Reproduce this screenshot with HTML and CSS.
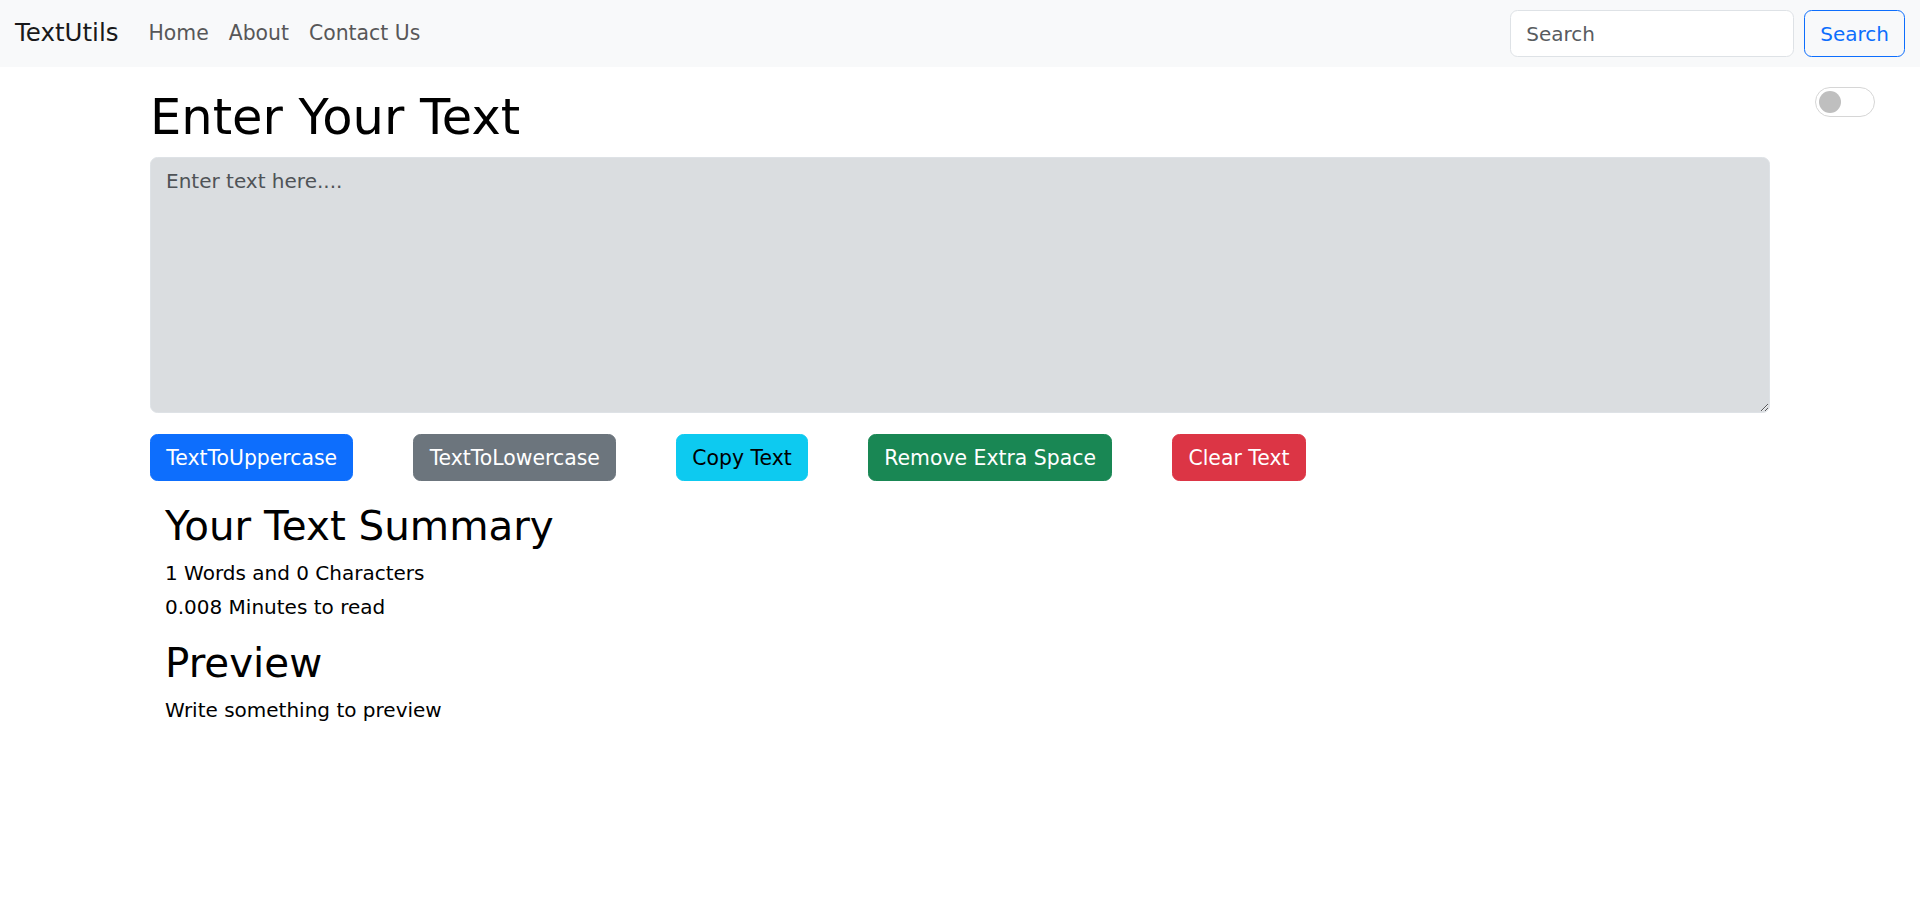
FILE: index.html
```html
<!DOCTYPE html>
<html lang="en">
<head>
<meta charset="utf-8">
<title>TextUtils</title>
<link rel="stylesheet" href="styles.css">
</head>
<body>
<nav class="navbar">
  <a class="brand" href="#">TextUtils</a>
  <ul class="nav-links">
    <li><a href="#">Home</a></li>
    <li><a href="#">About</a></li>
    <li><a href="#">Contact Us</a></li>
  </ul>
  <form class="search">
    <input class="search-input" type="search" placeholder="Search">
    <button class="btn-outline" type="button">Search</button>
  </form>
</nav>

<div class="mode-toggle"><span class="knob"></span></div>

<div class="container">
  <h1 class="title">Enter Your Text</h1>
  <textarea class="text-box" placeholder="Enter text here...."></textarea>
  <div class="actions">
    <button class="btn btn-primary" type="button">TextToUppercase</button>
    <button class="btn btn-secondary" type="button">TextToLowercase</button>
    <button class="btn btn-info" type="button">Copy Text</button>
    <button class="btn btn-success" type="button">Remove Extra Space</button>
    <button class="btn btn-danger" type="button">Clear Text</button>
  </div>
</div>

<div class="container summary">
  <h2 class="section-title">Your Text Summary</h2>
  <p class="line">1 Words and 0 Characters</p>
  <p class="line">0.008 Minutes to read</p>
  <h2 class="section-title preview-title">Preview</h2>
  <p class="line">Write something to preview</p>
</div>
</body>
</html>
```

FILE: styles.css
```css
* { box-sizing: border-box; }

body {
  margin: 0;
  font-family: "DejaVu Sans", sans-serif;
  color: #000;
  background: #fff;
}

.navbar {
  display: flex;
  align-items: center;
  height: 67px;
  padding: 0 15px;
  background: #f8f9fa;
}

.brand {
  font-size: 24.5px;
  line-height: 36px;
  margin-top: -2px;
  color: #19191a;
  text-decoration: none;
  margin-right: 20px;
}

.nav-links {
  display: flex;
  list-style: none;
  margin: -2px 0 0;
  padding: 0;
}

.nav-links a {
  display: block;
  padding: 0 10px;
  font-size: 20.4px;
  line-height: 30px;
  color: #575758;
  text-decoration: none;
}

.search {
  margin: 0 0 0 auto;
  display: flex;
  gap: 10px;
}

.search-input {
  width: 284px;
  height: 47px;
  padding: 0 15px;
  border: 1.25px solid #dee2e6;
  border-radius: 7.5px;
  background: #fff;
  font-family: "DejaVu Sans", sans-serif;
  font-size: 20px;
  color: #212529;
}

.search-input::placeholder { color: #595c5f; }

.btn-outline {
  height: 47px;
  padding: 0 15px;
  border: 1.25px solid #0d6efd;
  border-radius: 7.5px;
  background: transparent;
  color: #0d6efd;
  font-family: "DejaVu Sans", sans-serif;
  font-size: 20px;
}

.mode-toggle {
  float: right;
  display: flex;
  align-items: center;
  width: 60px;
  height: 30px;
  margin: 20px 45px 0 0;
  padding-left: 3px;
  border: 1.25px solid #d6d6d6;
  border-radius: 15px;
  background: #fff;
}

.knob {
  width: 22px;
  height: 22px;
  border-radius: 50%;
  background: #bfbfbf;
}

.container {
  max-width: 1650px;
  margin: 20px auto 0;
  padding: 0 15px;
}

.title {
  margin: 0 0 10px;
  font-size: 49.5px;
  line-height: 60px;
  font-weight: 400;
}

.text-box {
  display: block;
  width: 100%;
  height: 256px;
  padding: 7.5px 15px;
  border: 1.25px solid #dee2e6;
  border-radius: 7.5px;
  background: #dadde0;
  font-family: "DejaVu Sans", sans-serif;
  font-size: 20px;
  line-height: 30px;
  color: #212529;
}

.text-box::placeholder { color: #4f5357; }

.actions {
  display: flex;
  gap: 60px;
  margin-top: 21px;
}

.btn {
  padding: 7.5px 15.25px;
  border: 1px solid transparent;
  border-radius: 7.5px;
  font-family: "DejaVu Sans", sans-serif;
  font-size: 20.4px;
  line-height: 30px;
  color: #fff;
}

.btn-primary { background: #0d6efd; border-color: #0d6efd; }
.btn-secondary { background: #6c757d; border-color: #6c757d; }
.btn-info { background: #0dcaf0; border-color: #0dcaf0; color: #000; }
.btn-success { background: #198754; border-color: #198754; }
.btn-danger { background: #dc3545; border-color: #dc3545; }

.summary {
  margin-top: 21px;
  padding: 0 30px;
}

.section-title {
  margin: 0 0 8px;
  font-size: 40.4px;
  line-height: 48px;
  font-weight: 400;
}

.preview-title { margin-top: 17px; }

.line {
  margin: 0 0 4px;
  font-size: 20px;
  line-height: 30px;
}
```
